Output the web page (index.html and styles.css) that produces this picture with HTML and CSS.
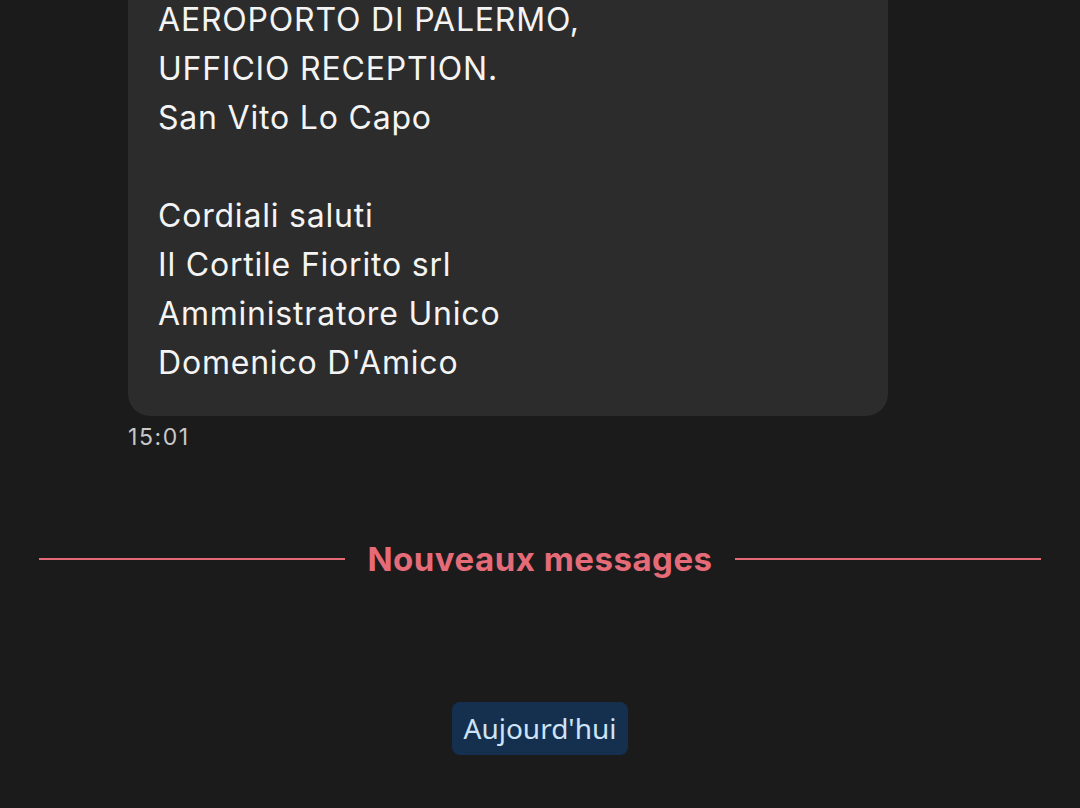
FILE: index.html
```html
<!DOCTYPE html>
<html>
<head>
<meta charset="utf-8">
<link rel="stylesheet" href="styles.css">
</head>
<body>
<main class="chat">
  <div class="msg">
    <div class="bubble">
      <p class="line">AEROPORTO DI PALERMO,</p>
      <p class="line">UFFICIO RECEPTION.</p>
      <p class="line">San Vito Lo Capo</p>
      <p class="line blank">&nbsp;</p>
      <p class="line">Cordiali saluti</p>
      <p class="line">Il Cortile Fiorito srl</p>
      <p class="line">Amministratore Unico</p>
      <p class="line">Domenico D'Amico</p>
    </div>
    <div class="time">15:01</div>
  </div>
  <div class="divider">
    <span class="rule"></span>
    <span class="divider-label">Nouveaux messages</span>
    <span class="rule"></span>
  </div>
  <div class="day">
    <span class="day-pill">Aujourd'hui</span>
  </div>
</main>
</body>
</html>
```
FILE: styles.css
```css
html, body {
  margin: 0;
  padding: 0;
  background: #1b1b1b;
  height: 100%;
  overflow: hidden;
}
body {
  font-family: Inter, "Noto Sans", sans-serif;
  color: #ffffff;
}
.chat {
  display: flex;
  flex-direction: column;
}
.msg {
  padding-left: 128px;
  display: flex;
  flex-direction: column;
}
.bubble {
  width: 760px;
  box-sizing: border-box;
  background: #2c2c2c;
  border-radius: 0 0 22px 22px;
  padding: 0 30px 29px 30px;
  margin-top: -5px;
}
.line {
  margin: 0;
  font-size: 32px;
  letter-spacing: 0.8px;
  line-height: 49px;
  color: #f4f4f4;
  white-space: nowrap;
}
.time {
  margin-top: 8px;
  font-size: 23px;
  letter-spacing: 1.6px;
  line-height: 26px;
  color: #c8c8c8;
}
.divider {
  margin-top: 89px;
  display: flex;
  align-items: center;
  padding: 0 39px;
  gap: 22px;
}
.rule {
  flex: 1;
  height: 2px;
  background: #e46a78;
}
.divider-label {
  font-size: 33px;
  font-weight: 700;
  letter-spacing: 0.5px;
  line-height: 40px;
  color: #e66b79;
}
.day {
  margin-top: 123px;
  display: flex;
  justify-content: center;
}
.day-pill {
  font-family: "Noto Sans", sans-serif;
  background: #15304f;
  color: #cde3f7;
  font-size: 28px;
  line-height: 53px;
  padding: 0 11px;
  border-radius: 8px;
}
```
